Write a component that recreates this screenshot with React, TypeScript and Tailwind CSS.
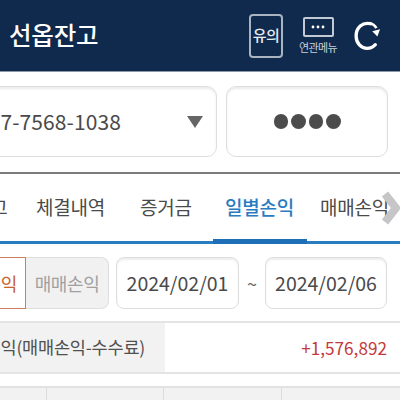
import React from "react";

const font = { fontFamily: '"Noto Sans CJK KR", "Noto Sans", sans-serif' };

function Tab({ label, active, className }: { label: string; active?: boolean; className: string }) {
  return (
    <div
      className={
        "absolute top-[20px] whitespace-nowrap text-[19px] leading-[26px] tracking-[-0.2px] " +
        (active ? "font-medium text-[#2a7cc0] " : "text-[#4a4a4a] ") +
        className
      }
    >
      {label}
    </div>
  );
}

export default function App() {
  return (
    <div style={font} className="relative h-[400px] w-[400px] overflow-hidden bg-white">
      {/* header */}
      <header className="flex h-[72px] items-center justify-between border-b border-b-[#8d99aa] bg-[#0f2a4d] pl-[9px] pr-[20px]">
        <h1 className="text-[24.5px] font-medium leading-none tracking-[-0.2px] text-white">선옵잔고</h1>
        <div className="flex items-center">
          <div className="flex h-[44px] w-[34px] items-center justify-center rounded-[4px] border-2 border-[#a9b3c1] text-[15px] font-medium tracking-[-0.5px] text-[#e8ecf1]">
            유의
          </div>
          <div className="ml-[19px] flex w-[32px] flex-col items-center">
            <div className="flex h-[20px] w-[31px] items-center justify-center rounded-[2px] border-2 border-[#c2cad5]">
              <svg width="14" height="4" viewBox="0 0 14 4">
                <circle cx="2" cy="2" r="1.4" fill="#fff" />
                <circle cx="7" cy="2" r="1.4" fill="#fff" />
                <circle cx="12" cy="2" r="1.4" fill="#fff" />
              </svg>
            </div>
            <div className="mt-[3px] whitespace-nowrap text-[11px] leading-[14px] tracking-[-0.6px] text-[#c9d0da]">연관메뉴</div>
          </div>
          <svg className="ml-[19px]" width="27" height="34" viewBox="0 0 26 32" fill="none">
            <path d="M17 4.2C9 2.2 3 8.2 3 16c0 7 5 12 10.5 12 3.5 0 6-1.4 8-3.6" stroke="#fff" strokeWidth="3.2" strokeLinecap="round" />
            <path d="M15.5 3.5c3 .5 5.5 2 7 5" stroke="#fff" strokeWidth="2.6" />
            <path d="M18.5 11.5 L26 9.5 L23.5 16.5 Z" fill="#fff" />
          </svg>
        </div>
      </header>

      {/* account row */}
      <div className="mt-[14px] flex h-[71px] gap-[9px]">
        <div className="-ml-[30px] flex w-[247px] items-center justify-end rounded-[10px] border border-[#dedede] shadow-[inset_0_2px_2px_rgba(0,0,0,0.08)]">
          <span className="mr-[66px] text-[21px] tracking-[0.1px] text-[#4a4a4a]">-7-7568-1038</span>
          <div className="mr-[13px] h-0 w-0 border-x-[8.5px] border-t-[12px] border-x-transparent border-t-[#666]" />
        </div>
        <div className="flex w-[162px] items-center justify-center gap-[3px] rounded-[10px] border border-[#dedede] shadow-[inset_0_2px_2px_rgba(0,0,0,0.08)]">
          <span className="h-[14.5px] w-[14.5px] rounded-full bg-[#4c4c4c]" />
          <span className="h-[14.5px] w-[14.5px] rounded-full bg-[#4c4c4c]" />
          <span className="h-[14.5px] w-[14.5px] rounded-full bg-[#4c4c4c]" />
          <span className="h-[14.5px] w-[14.5px] rounded-full bg-[#4c4c4c]" />
        </div>
      </div>

      {/* tabs */}
      <div className="relative mt-[15px] h-[72px] border-t-2 border-b-[3px] border-t-[#7b7b7b] border-b-[#2a7cc0]">
        <Tab label="잔고" className="-left-[27px]" />
        <Tab label="체결내역" className="left-[36px]" />
        <Tab label="증거금" className="left-[140px]" />
        <Tab label="일별손익" active className="left-[225px]" />
        <Tab label="매매손익" className="left-[320px]" />
        <div className="absolute bottom-[-3px] left-[213px] h-[5px] w-[94px] bg-[#1f6fb8]" />
        <svg className="absolute left-[379px] top-[16px]" width="21" height="36" viewBox="0 0 21 36">
          <path d="M6 4 L17 18 L6 32" fill="none" stroke="#c6c6c8" strokeWidth="8" strokeLinejoin="round" />
        </svg>
      </div>

      {/* date row */}
      <div className="mt-[13px] flex h-[52px] items-stretch">
        <div className="-ml-[60px] flex w-[86px] items-center justify-end overflow-hidden border border-[#c9805f] pr-[8px] text-[18px] tracking-[-0.2px] text-[#c8622f]">
          일별손익
        </div>
        <div className="flex w-[83px] items-center justify-center rounded-r-[8px] border border-l-0 border-[#dedede] bg-[#f1f1f1] text-[18px] tracking-[-0.4px] text-[#a0a0a0]">
          매매손익
        </div>
        <div className="ml-[7px] flex w-[123px] items-center justify-center rounded-[8px] border border-[#dedede] text-[19.5px] text-[#4a4a4a] shadow-[inset_0_2px_2px_rgba(0,0,0,0.07)]">
          2024/02/01
        </div>
        <div className="flex w-[26px] items-center justify-center text-[18px] text-[#666]">~</div>
        <div className="flex w-[122px] items-center justify-center rounded-[8px] border border-[#dedede] text-[19.5px] text-[#4a4a4a] shadow-[inset_0_2px_2px_rgba(0,0,0,0.07)]">
          2024/02/06
        </div>
      </div>

      {/* summary */}
      <div className="mt-[12px] flex h-[53px] items-center justify-between border-y-2 border-[#e4e4e4]">
        <div className="flex h-full w-[165px] items-center justify-end overflow-hidden whitespace-nowrap bg-[#f2f2f2] pr-[20px] text-[17.5px] tracking-[-0.2px] text-[#505050]">
          일별손익(매매손익-수수료)
        </div>
        <div className="pr-[13px] text-[17.2px] text-[#c23a3a]">+1,576,892</div>
      </div>

      {/* table head */}
      <div className="mt-[12px] grid h-[20px] grid-cols-[47px_117px_118px_118px] border-t-2 border-[#e2e2e2] bg-[#f2f2f2]">
        <div className="border-r border-[#dcdcdc]" />
        <div className="border-r border-[#dcdcdc]" />
        <div className="border-r border-[#dcdcdc]" />
        <div />
      </div>
    </div>
  );
}
